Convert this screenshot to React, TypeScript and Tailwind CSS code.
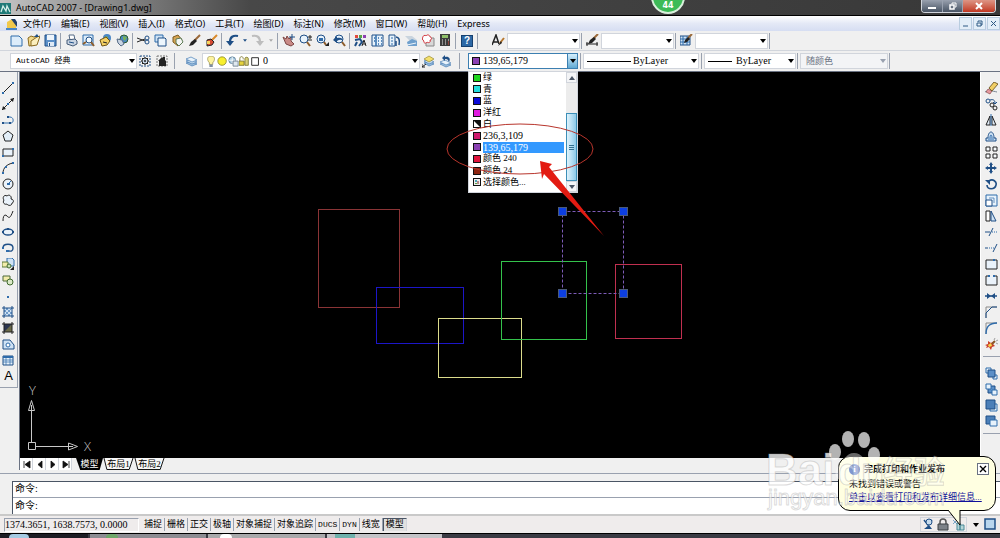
import { useState, type ReactNode } from 'react';

const NAVY = '#1f4f86';
const BLUE = '#2f6cab';
const INK = '#222';

const icons: Record<string, ReactNode> = {
  new: <path d="M1 2h8l3 3v7H1z" fill="#dcecfa" stroke={BLUE} />,
  open: (
    <>
      <path d="M1 4l3-2 3 1 4-1-3 9-6 1z" fill="#f2d98a" stroke="#8a6a20" />
      <path d="M4 7l6-4 3-1-3 9-6 1z" fill="#fbeebc" stroke="#8a6a20" />
      <path d="M7 3l3-3 2 3z" fill={NAVY} />
    </>
  ),
  save: (
    <>
      <path d="M1 1h11v11H1z" fill="#5b8fc7" stroke={NAVY} />
      <path d="M3 1h7v5H3z" fill="#eef5fb" />
      <path d="M4 8h6v4H4z" fill="#dfeaf5" />
      <path d="M5 9h1v3H5z" fill={NAVY} />
    </>
  ),
  print: (
    <>
      <path d="M4 1h5l1 5H5z" fill="#fff" stroke="#556a85" />
      <path d="M2 6l8-1 2 2v3l-4 2-6-2z" fill="#c9d4e2" stroke="#445a78" />
      <path d="M4 8l5 1" stroke={NAVY} />
    </>
  ),
  preview: (
    <>
      <path d="M1 1h10v10H1z" fill="#dcecfa" stroke={BLUE} />
      <circle cx="7" cy="6" r="3" fill="#f5fbff" stroke={NAVY} />
      <path d="M9 8l3 4M1 10l3-2" stroke="#8d5d2c" strokeWidth="2" />
    </>
  ),
  publish: (
    <>
      <circle cx="8" cy="4" r="4" fill="#4a86c5" />
      <path d="M6 2l3 1-1 3z" fill="#7cb342" />
      <path d="M1 6l6-3 4 4-3 4-5 1z" fill="#f3cf63" stroke="#6f5414" />
      <path d="M4 8l4 1" stroke={INK} />
    </>
  ),
  dwf: (
    <>
      <circle cx="8" cy="5" r="4" fill="#4a86c5" stroke="#2d5b2f" />
      <path d="M7 2l4 1-2 4-2-2z" fill="#78b159" />
      <path d="M1 5l5 1 2 4-3 2-3-3z" fill="#c9d4e2" stroke="#556a85" />
    </>
  ),
  cut: (
    <>
      <path d="M0 4l8 3M0 8l8-3" stroke={INK} />
      <circle cx="10" cy="4" r="2" fill="none" stroke={NAVY} />
      <circle cx="10" cy="8" r="2" fill="none" stroke={NAVY} />
    </>
  ),
  copy: (
    <>
      <path d="M1 1h8v7H1z" fill="#cfe2f4" stroke={BLUE} />
      <path d="M4 4h7l1 1v7H4z" fill="#edf6fd" stroke={NAVY} />
    </>
  ),
  paste: (
    <>
      <path d="M2 3l5-2 4 5-4 6-5-4z" fill="#d5a453" stroke="#7a5a20" />
      <path d="M5 5l5-1 2 4-4 4-3-3z" fill="#f4f6f4" stroke="#5c7a55" />
    </>
  ),
  brush: (
    <>
      <path d="M12 1L6 7" stroke="#9b6a3a" strokeWidth="2" />
      <path d="M7 5l2 2-4 4-4 1 2-4z" fill={INK} />
    </>
  ),
  blockEdit: (
    <>
      <path d="M12 1L7 6" stroke="#d98a2b" strokeWidth="2" />
      <path d="M2 6l4-1 3 3-2 3-5 1z" fill="#d64a33" stroke={INK} />
      <path d="M2 7h3v3H2z" fill="#f5d35c" />
    </>
  ),
  undo: (
    <>
      <path d="M12 2C7 1 4 3 4 8" fill="none" stroke={NAVY} strokeWidth="2.2" />
      <path d="M0 7h8l-4 5z" fill={NAVY} />
    </>
  ),
  redo: (
    <>
      <path d="M1 2c5-1 8 1 8 6" fill="none" stroke="#bdbdbd" strokeWidth="2.2" />
      <path d="M5 7h8l-4 5z" fill="#bdbdbd" />
    </>
  ),
  pan: (
    <>
      <path d="M1 3l3 2 1-3 2 3 2-2v4l3 3-3 2-5-2z" fill="#c98a86" stroke="#7c4644" />
      <path d="M10 0v6M7 3h6" stroke={NAVY} />
    </>
  ),
  zoomRt: (
    <>
      <circle cx="5" cy="5" r="4" fill="#e7f2fb" stroke={NAVY} />
      <path d="M8 8l3 4" stroke="#8d5d2c" strokeWidth="2" />
      <path d="M11 1v4M9 3h4M9 6h4" stroke={INK} />
    </>
  ),
  zoomWin: (
    <>
      <circle cx="5" cy="5" r="4" fill="#e7f2fb" stroke={NAVY} />
      <path d="M3 4h4v3H3z" fill={BLUE} />
      <path d="M8 8l2 3" stroke="#8d5d2c" strokeWidth="2" />
      <path d="M9 12h4V8z" fill={INK} />
    </>
  ),
  zoomPrev: (
    <>
      <circle cx="6" cy="5" r="4" fill="#e7f2fb" stroke={NAVY} />
      <path d="M0 6l4-4v2c3-1 6 0 6 3C8 5 6 6 4 7v2z" fill={NAVY} />
      <path d="M9 8l3 4" stroke="#8d5d2c" strokeWidth="2" />
    </>
  ),
  props: (
    <>
      <path d="M1 1h3v3H1z" fill="#e04a3c" />
      <path d="M5 1h3v3H5z" fill="#58a445" />
      <path d="M9 1h3v3H9z" fill="#8d3fb0" />
      <path d="M1 6l5-1 2 3-3 4M1 12l2-4" fill="none" stroke={NAVY} strokeWidth="2" />
      <path d="M8 12l2-6 2 6M9 10h3" fill="none" stroke={INK} />
    </>
  ),
  dcenter: (
    <>
      <path d="M1 1h11v11H1z" fill="#e7f2fb" stroke={NAVY} />
      <path d="M5 1v11M7 4h1M10 4h1M7 7h1M10 7h1M7 10h1M10 10h1M3 4h1M3 7h1" stroke={BLUE} strokeWidth="1.5" />
    </>
  ),
  palettes: (
    <>
      <path d="M1 1h6v11H1z" fill="#e7f2fb" stroke={NAVY} />
      <path d="M3 4h2M3 7h2M3 10h2" stroke={BLUE} />
      <path d="M8 3c3 0 4 3 3 8M8 7v5" fill="none" stroke={NAVY} strokeWidth="1.5" />
    </>
  ),
  sheets: (
    <>
      <path d="M0 2h7l5 4v2H6z" fill="#c9d4de" />
      <path d="M2 8l5-3 5 2v5H3z" fill="#6fa0cd" />
      <path d="M2 11l9-2" stroke="#eef5fb" />
    </>
  ),
  markup: (
    <>
      <path d="M4 4h8v8H4z" fill="#d8d8d8" stroke="#888" />
      <path d="M1 3c0-2 3-2 3-1 1-2 4-1 4 1 2 0 2 3 0 3 1 3-2 3-3 2-1 2-4 1-3-1-2-1-2-3-1-4z" fill="#fff" stroke="#d2353c" />
    </>
  ),
  calc: (
    <>
      <path d="M1 0h10v12H1z" fill="#3c3c3c" />
      <path d="M3 1h6v3H3z" fill="#8fbf6a" />
      <path d="M3 6h1M6 6h1M9 6h1M3 8h1M6 8h1M3 10h1M6 10h1" stroke="#e9e9e9" />
      <path d="M9 8h1M9 10h1" stroke="#e04a3c" />
    </>
  ),
  textStyle: (
    <>
      <path d="M0 11L4 1l3 9M1 8h5" fill="none" stroke={INK} strokeWidth="1.5" />
      <path d="M12 4L8 9" stroke="#b8772c" strokeWidth="2" />
      <path d="M9 7l1 2-4 3z" fill={INK} />
    </>
  ),
  dimStyle: (
    <>
      <path d="M0 10h12M1 8v4M11 8v4" stroke={INK} />
      <path d="M12 0L7 5" stroke="#9b6a3a" strokeWidth="2" />
      <path d="M8 3l2 2-4 4-4 1 2-4z" fill={INK} />
    </>
  ),
  tableStyle: (
    <>
      <path d="M0 2h10v9H0z" fill="#cfe2f4" stroke={NAVY} />
      <path d="M0 5h10M0 8h10M3 2v9M7 2v9" stroke={BLUE} />
      <path d="M12 0L8 4" stroke="#9b6a3a" strokeWidth="2" />
      <path d="M8 3l2 2-3 3-3 1 1-3z" fill={INK} />
    </>
  ),
  gear: (
    <>
      <path d="M1 1h10v10H1z" fill="none" stroke={NAVY} strokeDasharray="2 1" />
      <circle cx="6" cy="6" r="3" fill="#c9d9ea" stroke={INK} />
      <circle cx="6" cy="6" r="1" fill={INK} />
      <path d="M6 2v1M6 9v1M2 6h1M9 6h1M3 3l1 1M8 8l1 1M9 3L8 4M4 8L3 9" stroke={INK} />
    </>
  ),
  myspace: (
    <>
      <path d="M1 1h10v10H1z" fill="none" stroke="#777" strokeDasharray="2 1" />
      <path d="M2 6l4-4 1 1V2h2v3l1 1v5H3V6z" fill={INK} />
    </>
  ),
  layers: (
    <>
      <path d="M1 8l5-2 6 3-5 2z" fill="#9fc0de" stroke={BLUE} strokeWidth=".6" />
      <path d="M1 6l5-2 6 3-5 2z" fill="#c7dcee" stroke={BLUE} strokeWidth=".6" />
      <path d="M1 4l5-2 6 3-5 2z" fill="#e9f3fb" stroke={BLUE} strokeWidth=".6" />
    </>
  ),
  layerCur: (
    <>
      <path d="M2 8l5-2 5 3-5 2z" fill="#9fc0de" stroke={BLUE} strokeWidth=".6" />
      <path d="M2 6l5-2 5 3-5 2z" fill="#c7dcee" stroke={BLUE} strokeWidth=".6" />
      <path d="M2 4l5-3 5 3-5 3z" fill="#f3df6b" stroke="#8a7a20" strokeWidth=".6" />
      <path d="M0 12l4-3M0 9v3h3" fill="none" stroke={INK} />
    </>
  ),
  layerPrev: (
    <>
      <path d="M1 9l5-2 6 3-5 2z" fill="#9fc0de" stroke={BLUE} strokeWidth=".6" />
      <path d="M1 7l5-2 6 3-5 2z" fill="#e9f3fb" stroke={BLUE} strokeWidth=".6" />
      <path d="M10 7c2-3 0-6-4-5V0L3 3l3 3V4c3 0 3 1 4 3z" fill={NAVY} />
    </>
  ),
  bulb: (
    <>
      <path d="M6 0c5 0 5 5 2 8v2H4V8C1 5 1 0 6 0z" fill="#fdf3a0" stroke="#8c8240" strokeWidth=".8" />
      <path d="M4 10h4v3H4z" fill="#7d8da3" />
    </>
  ),
  sun: <circle cx="6" cy="6" r="5" fill="#f8ef2e" stroke="#8c8a30" />,
  freeze: (
    <>
      <circle cx="5" cy="5" r="4" fill="#a9cbe2" stroke="#5d7d95" />
      <path d="M5 1v8M1 5h8" stroke="#fff" />
      <path d="M6 6h6v6H6z" fill="#dfe8ef" stroke="#6c7c8c" />
    </>
  ),
  lock: (
    <>
      <path d="M1 6V3c0-3 4-3 4 0v1" fill="none" stroke="#7a7430" />
      <path d="M0 6h6v5H0z" fill="#e5d23c" stroke="#7a7430" />
      <path d="M7 5V3c0-2 4-2 4 0v8H7z" fill="#d8d07a" stroke="#7a7430" />
    </>
  ),
  swatch: <path d="M2 2h8v9H2z" fill="#fff" stroke="#111" />,

  line: (
    <>
      <path d="M1 11L11 1" stroke={INK} />
      <path d="M0 10h2v2H0zM10 0h2v2h-2z" fill={BLUE} />
    </>
  ),
  xline: (
    <>
      <path d="M0 12L12 0" stroke={INK} />
      <path d="M0 12l1-4 3 3zM12 0l-1 4-3-3z" fill={INK} />
      <path d="M5 5h2v2H5z" fill={BLUE} />
    </>
  ),
  pline: (
    <>
      <path d="M1 9h8c3 0 3-6-1-6H6" fill="none" stroke={BLUE} />
      <path d="M0 8h2v2H0zM7 8h2v2H7zM5 2h2v2H5z" fill={NAVY} />
    </>
  ),
  polygon: <path d="M6 1l5 4-2 6H3L1 5z" fill="#e3eef8" stroke={INK} />,
  rect: (
    <>
      <path d="M1 3h10v7H1z" fill="#eaf2fa" stroke={INK} />
      <path d="M0 9h2v2H0zM10 2h2v2h-2z" fill={BLUE} />
    </>
  ),
  arc: (
    <>
      <path d="M1 11C1 6 5 2 11 1" fill="none" stroke={INK} />
      <path d="M0 10h2v2H0zM3 4h2v2H3zM10 0h2v2h-2z" fill={BLUE} />
    </>
  ),
  circle: (
    <>
      <circle cx="6" cy="6" r="5" fill="#eaf2fa" stroke={INK} />
      <path d="M6 6l3-3" stroke={BLUE} />
      <path d="M5 5h3v2H5z" fill={BLUE} />
    </>
  ),
  cloud: <path d="M2 6C0 4 2 0 5 2c2-2 5 0 4 3 3 0 3 4 1 4 0 3-4 3-5 1-2 1-5-1-3-4z" fill="#eaf2fa" stroke={INK} />,
  spline: <path d="M1 11C1 5 3 4 5 6s3 3 6-5" fill="none" stroke={INK} />,
  ellipse: (
    <>
      <ellipse cx="6" cy="6" rx="5" ry="3" fill="#eaf2fa" stroke={NAVY} strokeWidth="1.4" />
      <path d="M0 5h2v2H0zM10 5h2v2h-2zM5 2h2v2H5z" fill={NAVY} />
    </>
  ),
  ellipseArc: (
    <>
      <path d="M1 6c0-5 10-5 10 0 0 4-3 3-5 3" fill="none" stroke={NAVY} strokeWidth="1.4" />
      <path d="M0 5h2v2H0zM4 8h3v2H4z" fill={BLUE} />
    </>
  ),
  insert: (
    <>
      <path d="M5 0h5l2 2v6H5z" fill="#cfe2f4" stroke={BLUE} />
      <path d="M0 4h6v5H0z" fill="#f2ecab" stroke="#5d7a3a" />
      <circle cx="7" cy="8" r="2" fill="#c9e0b4" stroke="#3f6a2c" />
      <path d="M8 12h4V8z" fill={INK} />
    </>
  ),
  block: (
    <>
      <path d="M1 2h7v5H1z" fill="#f2ecab" stroke="#4e6a3a" />
      <circle cx="8" cy="8" r="3" fill="#dbe9c8" stroke="#3f6a2c" />
    </>
  ),
  point: <path d="M5 6h2v2H5z" fill={BLUE} />,
  hatch: (
    <>
      <path d="M2 2h8v8H2z" fill="#cfe2f4" />
      <path d="M2 6l4-4M2 10l8-8M6 10l4-4M2 4l6 6M4 2l6 6" stroke={BLUE} strokeWidth=".6" />
      <path d="M2 0v12M10 0v12M0 2h12M0 10h12" stroke={NAVY} />
    </>
  ),
  gradient: (
    <>
      <path d="M2 2h8v8H2z" fill="#6b6a48" />
      <path d="M2 2h8l-8 8z" fill="#2b3550" />
      <path d="M2 0v12M10 0v12M0 2h12M0 10h12" stroke={INK} />
    </>
  ),
  region: (
    <>
      <path d="M1 2h7l4 5v4H1z" fill="#cfe2f4" stroke={NAVY} />
      <circle cx="6" cy="7" r="2" fill="#fff" stroke={BLUE} />
    </>
  ),
  table: (
    <>
      <path d="M1 2h10v9H1z" fill="#e7f2fb" stroke={NAVY} />
      <path d="M1 3h10" stroke={BLUE} strokeWidth="2" />
      <path d="M1 6h10M1 8h10M4 2v9M8 2v9" stroke={BLUE} strokeWidth=".7" />
    </>
  ),

  erase: (
    <>
      <path d="M0 10c3-2 8-1 12 0" fill="none" stroke="#7a8794" />
      <path d="M3 7l4 2-2 3-4-2z" fill="#e79aa0" stroke="#7b3a3a" strokeWidth=".6" />
      <path d="M4 6l5-6 4 2-6 7z" fill="#f1cf66" stroke="#5f4a16" strokeWidth=".8" />
    </>
  ),
  copyObj: (
    <>
      <circle cx="3" cy="3" r="2" fill="none" stroke={NAVY} />
      <circle cx="7" cy="7" r="2" fill="none" stroke={INK} />
      <circle cx="10" cy="10" r="2" fill="none" stroke={INK} />
      <path d="M5 2c3-1 5 0 5 3M8 4l2 2 2-2" fill="none" stroke={NAVY} />
    </>
  ),
  mirror: (
    <>
      <path d="M5 2v9H1zM7 2v9h4z" fill="#dfeaf5" stroke={INK} />
      <path d="M6 0v12" stroke={BLUE} />
    </>
  ),
  offset: (
    <>
      <path d="M1 11h10V8H9c0-8-6-8-6 0H1z" fill="#cfe2f4" stroke={NAVY} />
      <path d="M3 9h6M5 8c0-4 2-4 2 0" fill="none" stroke={BLUE} />
    </>
  ),
  array: <path d="M1 1h4v4H1zM8 1h4v4H8zM1 8h4v4H1zM8 8h4v4H8z" fill="#f7fafc" stroke={INK} />,
  move: <path d="M6 0l2 3H7v2h2V4l3 2-3 2V7H7v2h1l-2 3-2-3h1V7H3v1L0 6l3-2v1h2V3H4z" fill={NAVY} />,
  rotate: (
    <>
      <path d="M4 3c4-3 8 1 7 4-1 5-9 5-9 0" fill="none" stroke={NAVY} strokeWidth="1.6" />
      <path d="M0 2h5v5z" fill={NAVY} />
    </>
  ),
  scale: (
    <>
      <path d="M1 1h11v11H1z" fill="#e7f2fb" stroke={BLUE} />
      <path d="M1 6h6v6H1z" fill="#fff" stroke={NAVY} />
      <path d="M4 4h5v5" fill="none" stroke={BLUE} strokeWidth=".7" />
    </>
  ),
  stretch: (
    <>
      <path d="M1 1h4v10H1z" fill="#fff" stroke={INK} />
      <path d="M6 1l5 10H6z" fill="#cfe2f4" stroke={NAVY} />
    </>
  ),
  trim: (
    <>
      <path d="M0 6h5M4 10l4-8" stroke={NAVY} />
      <path d="M7 6h5" stroke={BLUE} strokeDasharray="1 1" />
    </>
  ),
  extend: (
    <>
      <path d="M0 6h3M8 10l4-8" stroke={NAVY} />
      <path d="M4 6h5" stroke={BLUE} strokeDasharray="1 1" />
    </>
  ),
  breakPt: (
    <>
      <path d="M1 2h11v9H1z" fill="#eaf2fa" stroke={INK} />
      <path d="M8 1h2v2H8z" fill={BLUE} />
    </>
  ),
  breakObj: (
    <>
      <path d="M4 2H1v9h11V2H9" fill="#eaf2fa" stroke={INK} />
      <path d="M3 1h2v2H3zM8 1h2v2H8z" fill={BLUE} />
    </>
  ),
  join: (
    <>
      <path d="M0 6h12" stroke={NAVY} strokeWidth="1.5" />
      <path d="M2 3l4 3-4 3zM10 3L6 6l4 3z" fill={NAVY} />
    </>
  ),
  chamfer: (
    <>
      <path d="M1 12V1h11" fill="none" stroke="#8a8a8a" />
      <path d="M1 12V7l6-6h5" fill="none" stroke={NAVY} />
    </>
  ),
  fillet: (
    <>
      <path d="M1 12V1h11" fill="none" stroke="#8a8a8a" />
      <path d="M1 12C1 5 4 1 12 1" fill="none" stroke={BLUE} strokeWidth="1.4" />
    </>
  ),
  explode: (
    <>
      <path d="M0 7l3-1 0-3 3 2 3-2-1 3 2 2-3 1-1 3-2-3-3 1 1-2z" fill="#c9402a" />
      <path d="M3 7l3-2 1 3-3 1z" fill="#f6d64a" />
      <path d="M7 6l3-3" stroke="#8a5a2a" strokeWidth="2" />
      <path d="M9 2l1-2M11 3l2-1M11 5l2 1" stroke="#8a8a8a" strokeWidth=".8" />
    </>
  ),
  orderFront: (
    <>
      <path d="M1 1h5v5H1zM8 8h4v4H8z" fill="#e7f2fb" stroke={BLUE} />
      <path d="M3 3h7v7H3z" fill="#5b8fc7" stroke={NAVY} />
    </>
  ),
  orderBack: (
    <>
      <path d="M3 3h7v7H3z" fill="#5b8fc7" stroke={NAVY} />
      <path d="M1 1h5v5H1zM7 7h5v5H7z" fill="#e7f2fb" stroke={BLUE} />
    </>
  ),
  orderAbove: (
    <>
      <path d="M5 5h7v7H5z" fill="#e7f2fb" stroke={BLUE} />
      <path d="M1 1h9v9H1z" fill="#4b7fb8" stroke={NAVY} />
    </>
  ),
  orderUnder: (
    <>
      <path d="M1 1h9v8H1z" fill="#4b7fb8" stroke={NAVY} />
      <path d="M5 5h7v6H5z" fill="#e7f2fb" stroke={BLUE} />
    </>
  ),
  comm: (
    <>
      <path d="M2 2l4 5 4-5" fill="none" stroke={NAVY} strokeWidth="1.5" />
      <circle cx="7" cy="4" r="3" fill="#c7dcee" stroke={NAVY} />
      <path d="M2 11h8l-3-4z" fill={NAVY} />
    </>
  ),
  padlock: (
    <>
      <path d="M3 6V4c0-4 6-4 6 0v2" fill="none" stroke="#555" strokeWidth="1.5" />
      <path d="M1 6h10v6H1z" fill="#7d8288" stroke="#3d4044" />
    </>
  ),
  plot: (
    <>
      <path d="M1 2l4 4M1 6l3-3" stroke="#7ba7c7" />
      <path d="M5 5h3v7H5zM8 7h4v5H8z" fill="#b7d6d8" stroke="#4b8a98" />
    </>
  ),
  clean: <path d="M1 1h10v10H1z" fill="#b9d6ee" stroke={NAVY} strokeWidth="1.5" />,
};

type Tool = [icon: string, label: string];

const standardTools: Tool[][] = [
  [['new', '新建'], ['open', '打开'], ['save', '保存']],
  [['print', '打印'], ['preview', '打印预览'], ['publish', '发布'], ['dwf', '三维 DWF']],
  [['cut', '剪切'], ['copy', '复制'], ['paste', '粘贴'], ['brush', '特性匹配'], ['blockEdit', '块编辑器']],
];

const viewTools: Tool[][] = [
  [['pan', '实时平移'], ['zoomRt', '实时缩放'], ['zoomWin', '窗口缩放'], ['zoomPrev', '缩放上一个']],
  [['props', '特性'], ['dcenter', '设计中心'], ['palettes', '工具选项板'], ['sheets', '图纸集'], ['markup', '标记集'], ['calc', '快速计算器']],
];

const drawTools: Tool[] = [
  ['line', '直线'], ['xline', '构造线'], ['pline', '多段线'], ['polygon', '正多边形'],
  ['rect', '矩形'], ['arc', '圆弧'], ['circle', '圆'], ['cloud', '修订云线'],
  ['spline', '样条曲线'], ['ellipse', '椭圆'], ['ellipseArc', '椭圆弧'], ['insert', '插入块'],
  ['block', '创建块'], ['point', '点'], ['hatch', '图案填充'], ['gradient', '渐变色'],
  ['region', '面域'], ['table', '表格'],
];

const modifyTools: Tool[] = [
  ['erase', '删除'], ['copyObj', '复制对象'], ['mirror', '镜像'], ['offset', '偏移'],
  ['array', '阵列'], ['move', '移动'], ['rotate', '旋转'], ['scale', '缩放'],
  ['stretch', '拉伸'], ['trim', '修剪'], ['extend', '延伸'], ['breakPt', '打断于点'],
  ['breakObj', '打断'], ['join', '合并'], ['chamfer', '倒角'], ['fillet', '圆角'],
  ['explode', '分解'],
];

const orderTools: Tool[] = [
  ['orderFront', '前置'], ['orderBack', '后置'], ['orderAbove', '置于对象之上'], ['orderUnder', '置于对象之下'],
];

const menus = [
  '文件(F)', '编辑(E)', '视图(V)', '插入(I)', '格式(O)', '工具(T)',
  '绘图(D)', '标注(N)', '修改(M)', '窗口(W)', '帮助(H)', 'Express',
];

const colors = [
  { name: '绿', fill: '#1fd61f' },
  { name: '青', fill: '#22dede' },
  { name: '蓝', fill: '#0a0ad8' },
  { name: '洋红', fill: '#e01be0' },
  { name: '白', fill: 'split' },
  { name: '236,3,109', fill: '#d01a6c' },
  { name: '139,65,179', fill: '#8b41b3' },
  { name: '颜色 240', fill: '#e0143c' },
  { name: '颜色 24', fill: '#8c2410' },
  { name: '选择颜色...', fill: 'picker' },
];

const modes = ['捕捉', '栅格', '正交', '极轴', '对象捕捉', '对象追踪', 'DUCS', 'DYN', '线宽', '模型'];

const SERIF = "font-['Liberation_Serif','Noto_Sans_CJK_SC',serif]";
const MONO = "font-['Liberation_Mono','Noto_Sans_CJK_SC',monospace]";

function Icon({ name, size = 'h-[13px] w-[13px]' }: { name: string; size?: string }) {
  return (
    <svg viewBox="0 0 13 13" className={`shrink-0 ${size}`} fill="none" aria-hidden="true">
      {icons[name]}
    </svg>
  );
}

function ToolButton({ tool }: { tool: Tool }) {
  return (
    <button aria-label={tool[1]} className="flex h-4 w-[17px] shrink-0 items-center justify-center hover:bg-blue-100">
      <Icon name={tool[0]} />
    </button>
  );
}

function Separator() {
  return <span className="mr-[2px] ml-px h-4 w-px shrink-0 bg-gray-400" />;
}

function Caret({ className = 'text-black' }: { className?: string }) {
  return (
    <svg viewBox="0 0 6 4" className={`h-[4px] w-[6px] shrink-0 ${className}`} aria-hidden="true">
      <path d="M0 0h6L3 4z" fill="currentColor" />
    </svg>
  );
}

interface ComboProps {
  label: string;
  value?: string;
  width: string;
  pad?: string;
  font?: string;
  disabled?: boolean;
  active?: boolean;
  children?: ReactNode;
}

function Combo({ label, value = '', width, pad = 'pl-1', font = `${SERIF} text-[10px]`, disabled, active, children }: ComboProps) {
  return (
    <div className={`relative h-4 shrink-0 ${width}`}>
      <select
        aria-label={label}
        disabled={disabled}
        className={`block h-4 w-full appearance-none border text-black outline-none disabled:text-gray-500 ${
          active ? 'border-[#3c7fb1] bg-white' : 'border-gray-300 bg-white disabled:bg-gray-100'
        } ${pad} ${font} leading-[14px]`}
      >
        <option>{value}</option>
      </select>
      <div className="pointer-events-none absolute inset-y-0 left-1 flex items-center">{children}</div>
      <div
        className={`pointer-events-none absolute inset-y-0 right-0 flex w-[11px] items-center justify-center ${
          active ? 'border border-[#3c7fb1] bg-linear-to-b from-[#d5effc] to-[#5fa9d3]' : ''
        }`}
      >
        <Caret className={disabled ? 'text-gray-400' : 'text-black'} />
      </div>
    </div>
  );
}

function Swatch({ fill }: { fill: string }) {
  return (
    <svg viewBox="0 0 8 8" className="h-2 w-2 shrink-0" aria-hidden="true">
      <path d="M0 0h8v8H0z" fill="#111" />
      {fill === 'split' && <path d="M1 1l6 6H1z" fill="#fff" />}
      {fill === 'picker' && (
        <>
          <path d="M1 1h6v6H1z" fill="#eee" />
          <path d="M2 2h2v2H2z" fill="#4aa3b8" />
          <path d="M4 3h2v3H4z" fill="#b88a8a" />
          <path d="M2 5h2v1H2z" fill="#58a445" />
        </>
      )}
      {fill.startsWith('#') && <path d="M1 1h6v6H1z" fill={fill} />}
    </svg>
  );
}

function ColorList({ selected, onSelect }: { selected: string; onSelect: (name: string) => void }) {
  return (
    <div className="absolute top-[18px] left-0 z-20 flex h-[122px] w-full border border-gray-300 bg-white">
      <div role="listbox" aria-label="颜色" className="flex flex-1 flex-col pb-1 pl-1">
        {colors.map((c) => (
          <button
            key={c.name}
            role="option"
            aria-selected={c.name === selected}
            onClick={() => onSelect(c.name)}
            className="flex min-h-0 flex-1 items-center gap-[2px] text-left"
          >
            <Swatch fill={c.fill} />
            <span
              className={`flex-1 ${SERIF} leading-[11px] ${/^\d/.test(c.name) ? 'text-[10px]' : 'text-[9px]'} ${
                c.name === selected ? 'bg-[#3399ff] text-white' : 'text-black'
              }`}
            >
              {c.name}
            </span>
          </button>
        ))}
      </div>
      <div className="ml-[2px] flex w-[11px] flex-col bg-[#ececec]">
        <button aria-label="向上滚动" className="flex h-[11px] items-center justify-center border border-gray-300 bg-gray-100">
          <Caret className="rotate-180 text-gray-600" />
        </button>
        <div className="flex-1" />
        <div className="flex h-[68px] flex-col items-center justify-center gap-px border border-[#3c8fb8] bg-linear-to-r from-[#dff3fc] to-[#8cc9e8]">
          <span className="h-px w-[5px] bg-[#33708f]" />
          <span className="h-px w-[5px] bg-[#33708f]" />
          <span className="h-px w-[5px] bg-[#33708f]" />
        </div>
        <button aria-label="向下滚动" className="flex h-[11px] items-center justify-center border border-gray-300 bg-gray-100">
          <Caret className="text-gray-600" />
        </button>
      </div>
    </div>
  );
}

function TitleBar() {
  return (
    <header className="relative flex h-4 shrink-0 items-start justify-between border-b border-black bg-linear-to-r from-[#c4c4c4] via-[#484848] via-25% to-[#383838]">
      <div className="flex h-[15px] items-center gap-1 pt-px">
        <svg viewBox="0 0 12 11" className="h-[11px] w-3" aria-hidden="true">
          <path d="M0 0h11v11H0z" fill="#1f7a78" />
          <path d="M1 9l2-6 3 5 1-5 3 6" fill="none" stroke="#d5efea" strokeWidth="1.3" />
        </svg>
        <h1 className="font-['Noto_Sans','Open_Sans',sans-serif] text-[9px] leading-[14px] text-black">
          AutoCAD 2007 - [Drawing1.dwg]
        </h1>
      </div>
      <div className="mr-1 flex h-[13px] overflow-hidden rounded-b border border-t-0 border-gray-300">
        <button aria-label="最小化" className="flex w-[21px] items-center justify-center border-r border-gray-400 bg-linear-to-b from-gray-400 to-gray-600">
          <span className="mt-[3px] h-[2px] w-2 bg-white" />
        </button>
        <button aria-label="还原" className="flex w-5 items-center justify-center border-r border-gray-400 bg-linear-to-b from-gray-400 to-gray-600">
          <svg viewBox="0 0 8 8" className="h-2 w-2" fill="none" stroke="#fff" aria-hidden="true">
            <path d="M3 2V1h4v4H6" />
            <path d="M1 3h4v4H1z" strokeWidth="1.5" />
          </svg>
        </button>
        <button aria-label="关闭" className="flex w-[32px] items-center justify-center bg-linear-to-b from-[#dd9585] to-[#c0351f]">
          <svg viewBox="0 0 8 8" className="h-2 w-2" stroke="#fff" strokeWidth="2" aria-hidden="true">
            <path d="M1 1l6 6M7 1L1 7" />
          </svg>
        </button>
      </div>
      <span className="absolute -top-5 left-[651px] flex h-[34px] w-[34px] items-end justify-center rounded-full border-2 border-[#d9f0dc] bg-[#3dbb57] pb-px font-['DejaVu_Sans',sans-serif] text-[8px] leading-[10px] font-bold text-white">
        44
      </span>
    </header>
  );
}

function MenuBar() {
  return (
    <nav className="flex h-[15px] shrink-0 items-center justify-between bg-linear-to-b from-white via-[#e4e9f6] to-[#d6def2]">
      <div className="flex items-center pl-[6px]">
        <svg viewBox="0 0 11 12" className="mr-[6px] h-3 w-[11px]" aria-hidden="true">
          <path d="M1 4l5-3 4 3v7H1z" fill="#f1c84b" />
          <path d="M5 1h4l2 3v5z" fill="#24416a" />
          <path d="M0 10h11v2H0z" fill="#4a86c5" />
        </svg>
        <ul className="flex gap-[10px] font-['Noto_Sans','Noto_Sans_CJK_SC',sans-serif] text-[9px] leading-[14px] text-black">
          {menus.map((m) => (
            <li key={m}>
              <button className="hover:bg-blue-200">{m}</button>
            </li>
          ))}
        </ul>
      </div>
      <div className="flex gap-px">
        {['M2 7h5', 'M3 3V2h4v4H6M2 4h4v3H2z', 'M2 2l5 5M7 2L2 7'].map((d, i) => (
          <button
            key={d}
            aria-label={['最小化文档', '还原文档', '关闭文档'][i]}
            className="flex h-[13px] w-[13px] items-center justify-center border border-[#b9cde0] bg-[#e3eef8]"
          >
            <svg viewBox="0 0 9 9" className="h-[9px] w-[9px]" fill="none" stroke="#2f5b84" aria-hidden="true">
              <path d={d} />
            </svg>
          </button>
        ))}
      </div>
    </nav>
  );
}

function ToolGroups({ groups }: { groups: Tool[][] }) {
  return groups.map((group) => (
    <div key={group[0][0]} className="flex items-center">
      {group.map((t) => (
        <ToolButton key={t[0]} tool={t} />
      ))}
      <Separator />
    </div>
  ));
}

function StandardBar() {
  return (
    <div className="flex h-5 shrink-0 items-center border-b border-gray-300 pl-2">
      <ToolGroups groups={standardTools} />
      <ToolButton tool={['undo', '放弃']} />
      <svg viewBox="0 0 6 4" className="mx-[2px] h-[3px] w-1" aria-hidden="true">
        <path d="M0 0h6L3 4z" fill="#1f4f86" />
      </svg>
      <ToolButton tool={['redo', '重做']} />
      <svg viewBox="0 0 6 4" className="mx-[3px] h-[3px] w-1" aria-hidden="true">
        <path d="M0 0h6L3 4z" fill="#aaa" />
      </svg>
      <Separator />
      <ToolGroups groups={viewTools} />
      <button
        aria-label="帮助"
        className="mx-[3px] flex h-3 w-3 items-center justify-center border border-[#16406f] bg-[#2c68a5] font-['Liberation_Sans',sans-serif] text-[10px] leading-3 font-bold text-white"
      >
        ?
      </button>
      <Separator />
      <div className="ml-[10px] flex items-center">
        <ToolButton tool={['textStyle', '文字样式']} />
        <Combo label="文字样式" width="w-[73px]" />
        <Separator />
        <ToolButton tool={['dimStyle', '标注样式']} />
        <Combo label="标注样式" width="w-[73px]" />
        <Separator />
        <ToolButton tool={['tableStyle', '表格样式']} />
        <Combo label="表格样式" width="w-[73px]" />
        <Separator />
      </div>
    </div>
  );
}

function PropertiesBar() {
  const [color, setColor] = useState('139,65,179');
  const current = colors.find((c) => c.name === color) ?? colors[6];

  return (
    <div className="flex h-[21px] shrink-0 items-center border-b border-gray-500 pl-[10px]">
      <Combo label="工作空间" value="AutoCAD 经典" width="w-[127px]" pad="pl-[5px]" font={`${MONO} text-[8px]`} />
      <ToolButton tool={['gear', '工作空间设置']} />
      <ToolButton tool={['myspace', '我的工作空间']} />
      <span className="w-[2px]" />
      <Separator />
      <div className="ml-[6px] flex items-center">
        <ToolButton tool={['layers', '图层特性管理器']} />
        <Combo label="图层" value="0" width="w-[218px] ml-[2px]" pad="pl-[60px]">
          <Icon name="bulb" size="h-[11px] w-[11px]" />
          <Icon name="sun" size="h-[11px] w-[11px]" />
          <Icon name="freeze" size="h-[11px] w-[11px]" />
          <Icon name="lock" size="h-[11px] w-[11px]" />
          <Icon name="swatch" size="h-[11px] w-[11px]" />
        </Combo>
        <ToolButton tool={['layerCur', '将对象的图层置为当前']} />
        <ToolButton tool={['layerPrev', '上一个图层']} />
        <span className="w-1" />
        <Separator />
      </div>
      <div className="relative ml-[6px]">
        <Combo label="颜色控制" value={color} width="w-[110px]" pad="pl-[14px]" active>
          <Swatch fill={current.fill} />
        </Combo>
        <ColorList selected={color} onSelect={setColor} />
      </div>
      <span className="w-px" />
      <Separator />
      <Combo label="线型控制" value="ByLayer" width="w-[116px]" pad="pl-[49px]">
        <span className="h-px w-11 bg-black" />
      </Combo>
      <span className="w-px" />
      <Separator />
      <Combo label="线宽控制" value="ByLayer" width="w-[92px]" pad="pl-[31px]">
        <span className="h-px w-6 bg-black" />
      </Combo>
      <Separator />
      <Combo label="打印样式控制" value="随颜色" width="w-[88px]" pad="pl-[5px]" font={`${SERIF} text-[9px]`} disabled />
      <Separator />
    </div>
  );
}

function Drawing() {
  return (
    <svg className="absolute inset-0 h-full w-full" fill="none" aria-label="Drawing1">
      {/* half-pixel shift keeps the one pixel strokes sharp */}
      <g transform="translate(-0.5 -0.5)">
        <rect x="299" y="138" width="81" height="98" stroke="#8a3436" />
        <rect x="357" y="216" width="87" height="56" stroke="#1c16c8" />
        <rect x="419" y="247" width="83" height="59" stroke="#dcdc8c" />
        <rect x="482" y="190" width="85" height="78" stroke="#34c24c" />
        <rect x="596" y="193" width="66" height="74" stroke="#c03050" />
        <rect x="543" y="140" width="61" height="82" stroke="#7d5cb8" strokeDasharray="3 2" />
        {[[543, 140], [604, 140], [543, 222], [604, 222]].map(([x, y]) => (
          <rect key={`${x}-${y}`} x={x - 4} y={y - 4} width="8" height="8" fill="#0d3fe0" stroke="#4a5a78" />
        ))}
      </g>
      <g stroke="#c8c8c8">
        <path d="M8.500 370.500h7v7h-7zM11.500 370V338M16 374.500h32" />
        <path d="M8.500 338.500l3-10 3 10zM11.500 338v-5M48.500 371l9 3.500-9 3.500zM48 374.500h5" />
      </g>
      <g fill="#c8c8c8" className="font-['Open_Sans',sans-serif] text-[13px] font-light">
        <text x="9" y="323">Y</text>
        <text x="64" y="379">X</text>
      </g>
    </svg>
  );
}

function LayoutTabs() {
  return (
    <div className="flex h-3 shrink-0 items-stretch bg-[#f0f0f0]">
      {[
        ['第一个', 'M3 2v7M9 2v7L4 5.5z'],
        ['上一个', 'M8 2v7L4 5.5z'],
        ['下一个', 'M4 2v7l4-3.500z'],
        ['最后一个', 'M9 2v7M3 2v7l5-3.500z'],
      ].map(([label, d]) => (
        <button key={label} aria-label={label} className="flex w-[13px] items-center justify-center border-r border-gray-300 bg-white">
          <svg viewBox="0 0 11 11" className="h-[11px] w-[11px]" fill="#111" stroke="#111" strokeWidth=".8" aria-hidden="true">
            <path d={d} />
          </svg>
        </button>
      ))}
      <div className={`flex pl-1 ${SERIF} text-[9px] leading-3`}>
        {['模型', '布局1', '布局2'].map((tab, i) => (
          <button key={tab} className={`relative h-3 px-[3px] ${i === 0 ? 'w-[27px] text-white' : 'w-[31px] text-black'}`}>
            <svg viewBox="0 0 32 12" preserveAspectRatio="none" className="absolute inset-0 h-full w-full" aria-hidden="true">
              {i === 0 ? (
                <path d="M0 0h32l-4 12H5z" fill="#000" />
              ) : (
                <path d="M1 0l3 11.500h23L31 0" fill="#f7f7f7" stroke="#111" />
              )}
            </svg>
            <span className="relative">{tab}</span>
          </button>
        ))}
      </div>
    </div>
  );
}

function CommandLine() {
  return (
    <div className="flex h-[46px] shrink-0 flex-col border-b-2 border-[#c9c9c9] bg-[#f0f0f0]">
      <div className="mt-[3px] h-[2px] border-t border-gray-400 bg-white" />
      <div className={`mt-[7px] ml-3 flex flex-1 flex-col border-t border-l border-gray-600 bg-white ${SERIF} text-[10px] leading-[14px] text-black`}>
        <p className="h-4 border-b border-gray-400 pl-[2px]">命令:</p>
        <label className="flex h-4 items-center pl-[2px]">
          命令:
          <input className="ml-1 h-3 flex-1 outline-none" />
        </label>
      </div>
    </div>
  );
}

function StatusBar() {
  return (
    <footer className="flex h-[17px] shrink-0 items-center bg-[#efecec] pl-1 text-black">
      <output className={`h-[14px] w-[135px] border border-t-gray-400 border-r-white border-b-white border-l-gray-400 ${SERIF} text-[10px] leading-3 whitespace-nowrap`}>
        1374.3651, 1638.7573, 0.0000
      </output>
      <div className={`ml-[3px] flex items-center ${MONO}`}>
        {modes.map((m) => (
          <button
            key={m}
            aria-pressed={m === '模型'}
            className={`h-[13px] border-r px-[2px] leading-3 whitespace-nowrap ${/^D/.test(m) ? 'text-[8px]' : 'text-[9px]'} ${
              m === '模型' ? 'border-t border-l border-gray-600 border-r-gray-300 bg-[#e0e0e0]' : 'border-gray-400'
            }`}
          >
            {m}
          </button>
        ))}
      </div>
      <div className="ml-auto flex items-center">
        <div className="flex h-[15px] items-center gap-[2px] border border-gray-300 px-px">
          <Icon name="comm" />
          <Icon name="padlock" />
          <Icon name="plot" />
        </div>
        <span className="flex w-[17px] justify-center">
          <Caret />
        </span>
        <button aria-label="全屏显示" className="mr-[3px]">
          <Icon name="clean" />
        </button>
      </div>
    </footer>
  );
}

function Taskbar() {
  return (
    <div className="flex h-[5px] shrink-0 gap-[2px] border-t border-black bg-[#3b3b44]">
      <div className="flex w-[88px] justify-center bg-[#1d1d24] pr-[50px]">
        <span className="h-1 w-5 rounded-t-full bg-[#a6cbe3]" />
      </div>
      <div className="flex w-[116px] bg-[#8d8d93] pl-4">
        <span className="h-1 w-3 rounded-t-full bg-[#6fa86a]" />
      </div>
      <div className="flex w-[117px] bg-[#a9a9ab] pl-3">
        <span className="h-1 w-3 rounded-t-full bg-white" />
      </div>
      <div className="flex w-[115px] bg-[#c4c4c8] pl-2">
        <span className="h-1 w-5 bg-[#6fb1ac]" />
      </div>
    </div>
  );
}

function PublishBalloon() {
  return (
    <section className="absolute right-1 bottom-[27px] z-10 h-[55px] w-[158px] rounded-[12px] border border-black bg-[#ffffe1] pt-[5px] pl-[10px]">
      <svg viewBox="0 0 14 17" className="absolute top-[52px] left-[108px] h-[17px] w-[14px]" aria-hidden="true">
        <path d="M1 0v1l12 15V0z" fill="#ffffe1" />
        <path d="M1 1l12 15V1" fill="none" stroke="#000" />
      </svg>
      <div className="flex h-[14px] items-center">
        <span className="mr-1 flex h-[11px] w-[11px] items-center justify-center rounded-full bg-[#2c52b5] font-['Liberation_Serif',serif] text-[9px] leading-[11px] font-bold text-white">
          i
        </span>
        <h2 className={`${SERIF} text-[9px] leading-[14px] font-bold text-black`}>完成打印和作业发布</h2>
        <button aria-label="关闭" className="mr-[6px] ml-auto flex h-3 w-3 items-center justify-center border border-gray-500 bg-white">
          <svg viewBox="0 0 8 8" className="h-2 w-2" stroke="#000" strokeWidth="1.4" aria-hidden="true">
            <path d="M1 1l6 6M7 1L1 7" />
          </svg>
        </button>
      </div>
      <p className={`${SERIF} mt-px text-[9px] leading-[14px] text-black`}>未找到错误或警告</p>
      <a href="#details" className={`${SERIF} block text-[9px] leading-3 whitespace-nowrap text-[#10109a] underline`}>
        单击以查看打印和发布详细信息...
      </a>
    </section>
  );
}

function Watermark() {
  return (
    <svg viewBox="0 0 190 90" className="pointer-events-none absolute right-[56px] bottom-[21px] z-20 h-[90px] w-[190px]" aria-hidden="true">
      <g fill="#fff" fillOpacity=".7">
        <ellipse cx="81" cy="25" rx="6" ry="8" />
        <ellipse cx="94" cy="12" rx="6" ry="8" />
        <ellipse cx="110" cy="13" rx="6" ry="8" />
        <ellipse cx="120" cy="28" rx="6" ry="8" />
        <path d="M100 26c8 0 11 8 17 14 5 6 2 14-6 14H90c-8 0-11-8-6-14 6-6 8-14 16-14z" fillOpacity=".4" />
      </g>
      <g fill="#fff" fillOpacity=".8" stroke="#999" strokeOpacity=".35" className="font-['Liberation_Sans','Noto_Sans_CJK_SC',sans-serif] font-bold">
        <text x="12" y="58" className="text-[44px]">Bai</text>
        <text x="84" y="58" className="text-[38px]" fillOpacity=".35">du</text>
        <text x="129" y="56" className="text-[31px]" fillOpacity=".35">经验</text>
      </g>
      <text
        x="14"
        y="78"
        fill="#fff"
        fillOpacity=".6"
        stroke="#999"
        strokeOpacity=".35"
        className="font-['Liberation_Sans',sans-serif] text-[22px]"
      >
        jingyan.baidu.com
      </text>
    </svg>
  );
}

function Annotation() {
  return (
    <svg className="pointer-events-none absolute inset-0 z-30 h-full w-full" aria-hidden="true">
      <ellipse cx="520" cy="149" rx="73" ry="25" fill="none" stroke="#b8352c" />
      <path d="M540 161l12 3-3 3 55 69-60-62-2 5z" fill="#e31b12" />
    </svg>
  );
}

export default function App() {
  return (
    <div className="relative flex h-screen flex-col overflow-hidden bg-[#f0f0f0]">
      <TitleBar />
      <MenuBar />
      <StandardBar />
      <PropertiesBar />

      <main className="flex min-h-0 flex-1">
        <aside className="w-5 shrink-0 border-r border-gray-500">
          <div className="flex w-[18px] flex-col border-r border-b border-gray-400 pt-2 pb-[3px]">
            {drawTools.map((t) => (
              <ToolButton key={t[0]} tool={t} />
            ))}
            <button aria-label="多行文字" className="h-4 w-[17px] font-['Liberation_Sans',sans-serif] text-[13px] leading-4 text-black">
              A
            </button>
          </div>
        </aside>
        <div className="flex min-w-0 flex-1 flex-col">
          <div className="relative flex-1 bg-black">
            <Drawing />
          </div>
          <LayoutTabs />
        </div>
        <aside className="flex w-5 shrink-0 flex-col items-end border-l border-white">
          <div className="border-b border-gray-400 pt-2 pb-1">
            {modifyTools.map((t) => (
              <ToolButton key={t[0]} tool={t} />
            ))}
          </div>
          <div className="border-b border-gray-400 pt-2 pb-1">
            {orderTools.map((t) => (
              <ToolButton key={t[0]} tool={t} />
            ))}
          </div>
        </aside>
      </main>

      <CommandLine />
      <StatusBar />
      <Taskbar />

      <PublishBalloon />
      <Watermark />
      <Annotation />
    </div>
  );
}
